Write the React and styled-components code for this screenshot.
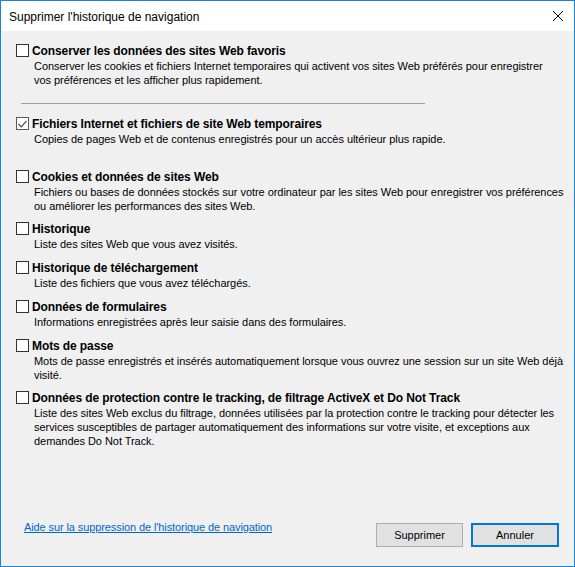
import styled, { createGlobalStyle } from "styled-components";

const GlobalStyle = createGlobalStyle`
html, body {
    margin: 0;
    padding: 0;
    background: #ffffff;
}
`

const Window = styled.div`
box-sizing: border-box;
width: 575px;
height: 567px;
border: 1px solid #1883d7;
display: flex;
flex-direction: column;
font-family: "Liberation Sans", Arial, sans-serif;
font-size: 11px;
color: #000;
background: #f0f0f0;
`

const TitleBar = styled.div`
height: 30px;
background: #fff;
display: flex;
align-items: center;
justify-content: space-between;
padding: 0 10px 0 8px;
flex-shrink: 0;
`

const Title = styled.span`
font-size: 12px;
margin-top: 1px;
`

const CloseIcon = styled.svg`
width: 10px;
height: 10px;
margin-right: 1px;
`

const Content = styled.div`
flex: 1;
display: flex;
flex-direction: column;
padding: 12px 15px 0 15px;
`

const Option = styled.div`
display: grid;
grid-template-columns: 16px 1fr;
margin-top: ${(p) => p.$gap}px;
`

const Box = styled.div`
box-sizing: border-box;
width: 13px;
height: 13px;
margin-top: 1px;
border: 1px solid ${(p) => (p.$checked ? "#5a5a5a" : "#333")};
background: #fff;
display: flex;
align-items: center;
justify-content: center;
`

const Label = styled.div`
font-size: 12px;
font-weight: bold;
line-height: 16px;
letter-spacing: -0.1px;
white-space: nowrap;
`

const Desc = styled.div`
grid-column: 2;
padding-left: 2px;
line-height: 14px;
letter-spacing: -0.05px;
white-space: nowrap;
`

const Separator = styled.div`
height: 1px;
width: 404px;
margin: 16px 0 12px 5px;
background: #a0a0a0;
`

const Footer = styled.div`
margin-top: auto;
display: flex;
justify-content: space-between;
align-items: flex-start;
padding: 0 15px 19px 23px;
`

const HelpLink = styled.a`
color: #0066cc;
text-decoration: underline;
line-height: 14px;
letter-spacing: -0.1px;
margin-top: -3px;
cursor: pointer;
`

const Buttons = styled.div`
display: flex;
gap: 8px;
`

const Button = styled.button`
box-sizing: border-box;
width: ${(p) => (p.$primary ? "88px" : "87px")};
height: 24px;
padding: 0;
font-family: "Liberation Sans", Arial, sans-serif;
font-size: 11px;
color: #000;
background: #e1e1e1;
border: ${(p) => (p.$primary ? "2px solid #0078d7" : "1px solid #adadad")};
`

const options = [
    {
        label: "Conserver les données des sites Web favoris",
        desc: ["Conserver les cookies et fichiers Internet temporaires qui activent vos sites Web préférés pour enregistrer", "vos préférences et les afficher plus rapidement."],
        gap: 0,
    },
    {
        label: "Fichiers Internet et fichiers de site Web temporaires",
        desc: ["Copies de pages Web et de contenus enregistrés pour un accès ultérieur plus rapide."],
        checked: true,
        gap: 0,
        separator: true,
    },
    {
        label: "Cookies et données de sites Web",
        desc: ["Fichiers ou bases de données stockés sur votre ordinateur par les sites Web pour enregistrer vos préférences", "ou améliorer les performances des sites Web."],
        gap: 23,
    },
    {
        label: "Historique",
        desc: ["Liste des sites Web que vous avez visités."],
        gap: 8,
    },
    {
        label: "Historique de téléchargement",
        desc: ["Liste des fichiers que vous avez téléchargés."],
        gap: 9,
    },
    {
        label: "Données de formulaires",
        desc: ["Informations enregistrées après leur saisie dans des formulaires."],
        gap: 9,
    },
    {
        label: "Mots de passe",
        desc: ["Mots de passe enregistrés et insérés automatiquement lorsque vous ouvrez une session sur un site Web déjà", "visité."],
        gap: 9,
    },
    {
        label: "Données de protection contre le tracking, de filtrage ActiveX et Do Not Track",
        desc: ["Liste des sites Web exclus du filtrage, données utilisées par la protection contre le tracking pour détecter les", "services susceptibles de partager automatiquement des informations sur votre visite, et exceptions aux", "demandes Do Not Track."],
        gap: 8,
    },
]

function Checkbox({ checked }) {
    return (
        <Box $checked={checked}>
            {checked && (
                <svg width="9" height="8" viewBox="0 0 9 8">
                    <path d="M0.5 4 L3.3 6.8 L8.5 0.8" fill="none" stroke="#4a4a4a" strokeWidth="1.2" />
                </svg>
            )}
        </Box>
    )
}

function App() {
    return (
        <>
            <GlobalStyle />
            <Window>
                <TitleBar>
                    <Title>Supprimer l'historique de navigation</Title>
                    <CloseIcon viewBox="0 0 10 10">
                        <path d="M0 0 L10 10 M10 0 L0 10" stroke="#000" strokeWidth="1" />
                    </CloseIcon>
                </TitleBar>
                <Content>
                    {options.map((opt, id) => (
                        <div key={id}>
                            {opt.separator && <Separator />}
                            <Option $gap={opt.gap}>
                                <Checkbox checked={opt.checked} />
                                <Label>{opt.label}</Label>
                                <Desc>
                                    {opt.desc.map((line, i) => (
                                        <div key={i}>{line}</div>
                                    ))}
                                </Desc>
                            </Option>
                        </div>
                    ))}
                </Content>
                <Footer>
                    <HelpLink>Aide sur la suppression de l'historique de navigation</HelpLink>
                    <Buttons>
                        <Button>Supprimer</Button>
                        <Button $primary>Annuler</Button>
                    </Buttons>
                </Footer>
            </Window>
        </>
    )
}

export default App;
